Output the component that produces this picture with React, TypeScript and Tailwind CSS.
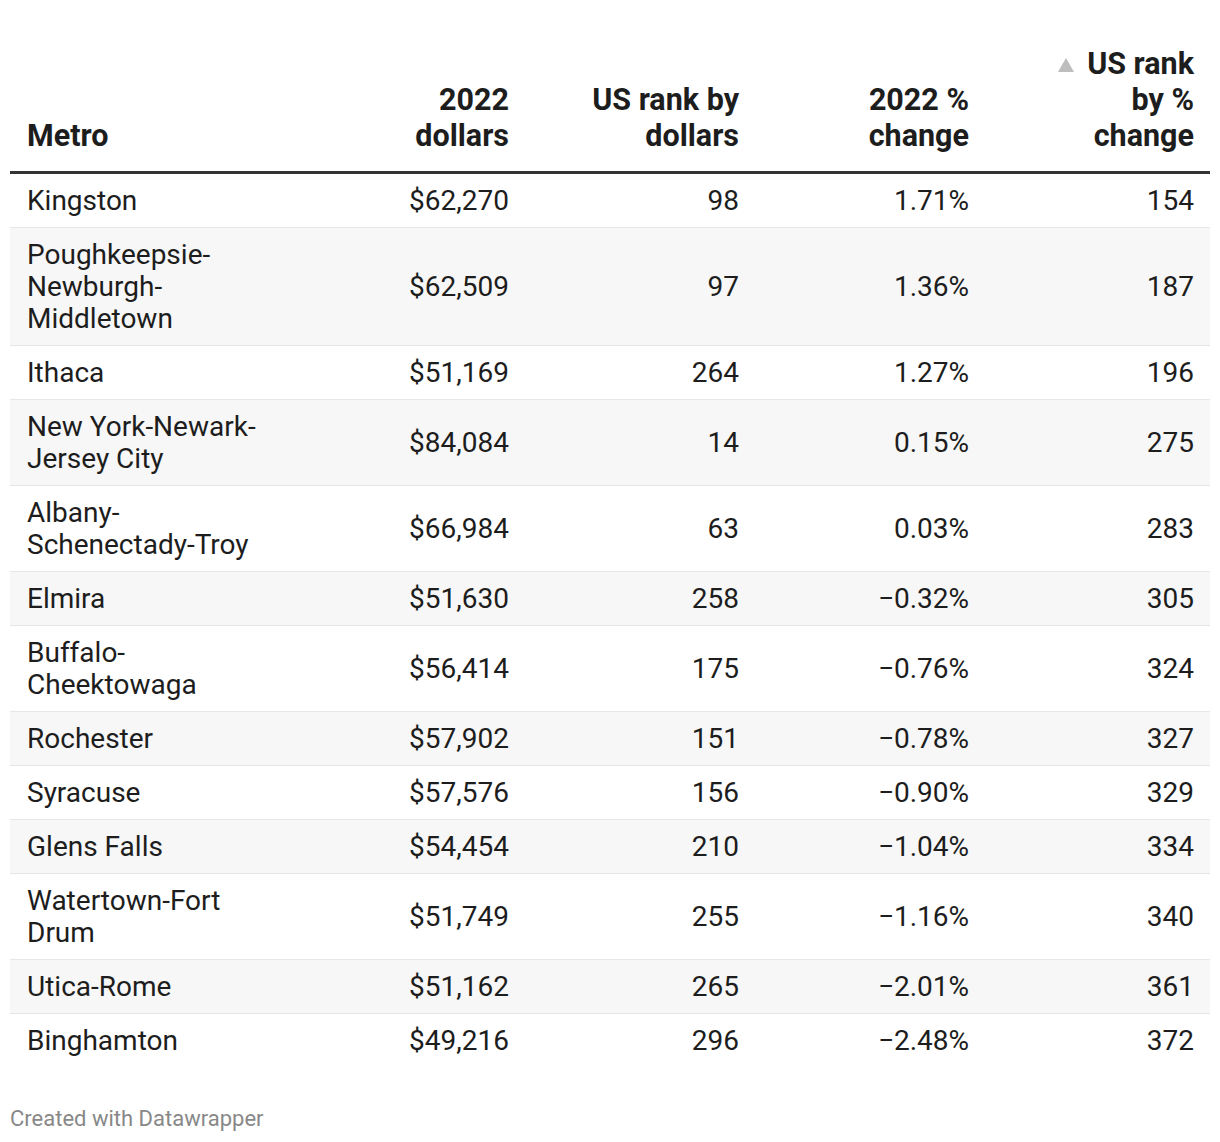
type Row = [string, string, string, string, string]

const rows: Row[] = [
  ['Kingston', '$62,270', '98', '1.71%', '154'],
  ['Poughkeepsie-Newburgh-Middletown', '$62,509', '97', '1.36%', '187'],
  ['Ithaca', '$51,169', '264', '1.27%', '196'],
  ['New York-Newark-Jersey City', '$84,084', '14', '0.15%', '275'],
  ['Albany-Schenectady-Troy', '$66,984', '63', '0.03%', '283'],
  ['Elmira', '$51,630', '258', '\u22120.32%', '305'],
  ['Buffalo-Cheektowaga', '$56,414', '175', '\u22120.76%', '324'],
  ['Rochester', '$57,902', '151', '\u22120.78%', '327'],
  ['Syracuse', '$57,576', '156', '\u22120.90%', '329'],
  ['Glens Falls', '$54,454', '210', '\u22121.04%', '334'],
  ['Watertown-Fort Drum', '$51,749', '255', '\u22121.16%', '340'],
  ['Utica-Rome', '$51,162', '265', '\u22122.01%', '361'],
  ['Binghamton', '$49,216', '296', '\u22122.48%', '372']
]

function SortArrow() {
  return (
    <svg width="16" height="14" viewBox="0 0 16 14" className="mr-[13px] inline-block align-[2px]">
      <path d="M8 0 L16 14 L0 14 Z" fill="#bdbdbd" />
    </svg>
  )
}

export default function App() {
  const th = 'align-bottom pb-[17px] px-[16px] text-right font-bold'
  const td = 'px-[16px] pt-[11px] pb-[10px] text-right align-middle'
  return (
    <div className="bg-white w-[1220px] h-[1142px] pt-[46px] px-[10px] text-[#1d1d1d]" style={{ fontFamily: 'Roboto, "Liberation Sans", sans-serif' }}>
      <table className="w-[1200px] table-fixed border-collapse">
        <colgroup>
          <col className="w-[285px]" />
          <col className="w-[230px]" />
          <col className="w-[230px]" />
          <col className="w-[230px]" />
          <col className="w-[225px]" />
        </colgroup>
        <thead>
          <tr className="border-b-[3px] border-[#333333] text-[30.5px] leading-[36px]">
            <th className="align-bottom pb-[17px] pl-[17px] pr-[16px] text-left font-bold">Metro</th>
            <th className={th}>
              2022
              <br />
              dollars
            </th>
            <th className={th}>
              US rank by
              <br />
              dollars
            </th>
            <th className={th}>
              2022 %
              <br />
              change
            </th>
            <th className={th}>
              <SortArrow />
              US rank
              <br />
              by %
              <br />
              change
            </th>
          </tr>
        </thead>
        <tbody className="text-[28px] leading-[32px]">
          {rows.map((r, i) => (
            <tr
              key={r[0]}
              className={
                (i % 2 === 1 ? 'bg-[#f7f7f7] ' : 'bg-white ') + (i < rows.length - 1 ? 'border-b border-[#e6e6e6]' : '')
              }
            >
              <td className="pl-[17px] pr-[16px] pt-[11px] pb-[10px] text-left align-middle">{r[0]}</td>
              <td className={td}>{r[1]}</td>
              <td className={td}>{r[2]}</td>
              <td className={td}>{r[3]}</td>
              <td className={td}>{r[4]}</td>
            </tr>
          ))}
        </tbody>
      </table>
      <div className="mt-[39px] text-[22px] leading-[26px] text-[#888888]">Created with Datawrapper</div>
    </div>
  )
}
